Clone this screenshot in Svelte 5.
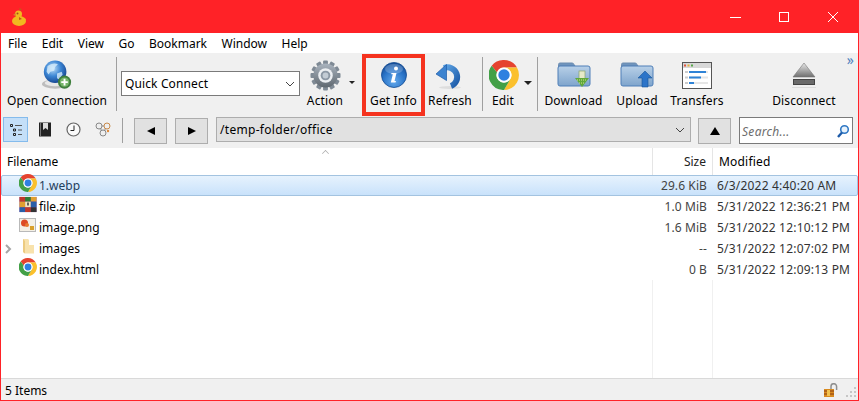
<script>
  const menus = ["File", "Edit", "View", "Go", "Bookmark", "Window", "Help"];
  const gearTeeth = Array.from({ length: 12 }, (_, i) => i * 30);
  const files = [
    { name: "1.webp", icon: "chrome", size: "29.6 KiB", modified: "6/3/2022 4:40:20 AM", selected: true },
    { name: "file.zip", icon: "zip", size: "1.0 MiB", modified: "5/31/2022 12:36:21 PM" },
    { name: "image.png", icon: "image", size: "1.6 MiB", modified: "5/31/2022 12:10:12 PM" },
    { name: "images", icon: "folder", size: "--", modified: "5/31/2022 12:07:02 PM", expandable: true },
    { name: "index.html", icon: "chrome", size: "0 B", modified: "5/31/2022 12:09:13 PM" }
  ];
</script>

{#snippet chrome(size)}
  <svg width={size} height={size} viewBox="4 4 40 40">
    <path fill="#e5432f" d="M24 4c7.4 0 13.900 4 17.300 10H24a10 10 0 0 0-9.400 6.600L7.600 11.800A20 20 0 0 1 24 4z" />
    <path fill="#fbc02d" d="M41.300 14A20 20 0 0 1 24 44l8.700-15A10 10 0 0 0 24 14z" />
    <path fill="#43a047" d="M7.600 11.800A20 20 0 0 0 24 44l8.700-15a10 10 0 0 1-18.100-8.400z" />
    <circle cx="24" cy="24" r="10" fill="#fff" />
    <circle cx="24" cy="24" r="7.600" fill="#2f80e0" />
  </svg>
{/snippet}

{#snippet folderIcon()}
  <path fill="#6f94bd" stroke="#6d8cb0" d="M1.500 9V4.500q0-1.500 1.500-1.500h12q1.500 0 2 1.500L18 6H1.500z" />
  <path fill="url(#folderFill)" stroke="#4f7fb8" d="M1 8q0-2 2-2h28q2 0 2 2v16q0 2-2 2H3q-2 0-2-2z" />
{/snippet}

<svg class="defs" width="0" height="0" aria-hidden="true">
  <defs>
    <radialGradient id="globeFill" cx="0.4" cy="0.35" r="0.7">
      <stop offset="0" stop-color="#bfe0f8" />
      <stop offset="0.5" stop-color="#3c86d4" />
      <stop offset="1" stop-color="#123f8a" />
    </radialGradient>
    <radialGradient id="infoFill" cx="0.5" cy="0.75" r="0.75">
      <stop offset="0" stop-color="#63a9ec" />
      <stop offset="0.6" stop-color="#2a74c8" />
      <stop offset="1" stop-color="#134a94" />
    </radialGradient>
    <linearGradient id="gearFill" x1="0" y1="0" x2="0" y2="1">
      <stop offset="0" stop-color="#aab4bf" />
      <stop offset="1" stop-color="#5f6870" />
    </linearGradient>
    <linearGradient id="folderFill" x1="0" y1="0" x2="0" y2="1">
      <stop offset="0" stop-color="#b8d0e8" />
      <stop offset="1" stop-color="#7ea4cc" />
    </linearGradient>
    <linearGradient id="ejectFill" x1="0" y1="0" x2="0" y2="1">
      <stop offset="0" stop-color="#e8e8e8" />
      <stop offset="1" stop-color="#6f6f6f" />
    </linearGradient>
    <linearGradient id="refreshFill" x1="0" y1="0" x2="1" y2="1">
      <stop offset="0" stop-color="#5ea4e4" />
      <stop offset="1" stop-color="#1c5aa8" />
    </linearGradient>
  </defs>
</svg>

<div class="window">
  <header class="titlebar">
    <svg class="duck" width="14" height="18" viewBox="0 0 14 18">
      <ellipse cx="7" cy="13" rx="7" ry="5" fill="#f1b81f" />
      <circle cx="6.500" cy="6" r="3.500" fill="#f1b81f" />
      <path fill="#f1b81f" d="M9 9l5 2-3 4z" />
      <path fill="#d9822b" d="M3.500 5L1 7l3 1z" />
      <circle cx="5.500" cy="5.500" r="1" fill="#a0501c" />
      <path fill="#c9541c" d="M7 0l3 1-2 2zM7 9l3 2-3 1z" />
    </svg>
    <div class="winbtns">
      <svg width="12" height="12" viewBox="0 0 12 12"><path d="M1 6.500h11" stroke="#fff" /></svg>
      <svg width="12" height="12" viewBox="0 0 12 12"><rect x="1.500" y="1.500" width="9" height="9" fill="none" stroke="#fff" /></svg>
      <svg width="12" height="12" viewBox="0 0 12 12"><path d="M1 1l10 10M11 1L1 11" stroke="#fff" /></svg>
    </div>
  </header>

  <nav class="menubar">
    {#each menus as menu}
      <span class="menu">{menu}</span>
    {/each}
  </nav>

  <div class="toolbar">
    <button class="tool open">
      <span class="slot">
        <svg width="32" height="31" viewBox="0 0 34 32">
          <ellipse cx="15" cy="25" rx="14" ry="5" fill="#bdbdbd" />
          <ellipse cx="15" cy="24" rx="11" ry="3.500" fill="#e8e8e8" />
          <circle cx="15" cy="12" r="12" fill="url(#globeFill)" />
          <path fill="#d6ecfb" opacity="0.8" d="M7 6q5-4 11-2l-3 3-1 4-4 1-2 3-2-3zM17 14l5-2 1 3-4 5-2-1z" />
          <circle cx="25" cy="23" r="7" fill="#3f7f3d" />
          <circle cx="25" cy="23" r="5" fill="#76b56a" />
          <path d="M25 19.500v7M21.500 23h7" stroke="#fff" stroke-width="2" />
        </svg>
      </span>
      <span>Open Connection</span>
    </button>
    <i class="sep"></i>

    <div class="quick">
      <span>Quick Connect</span>
      <svg width="10" height="6" viewBox="0 0 10 6"><path d="M1 1l4 4 4-4" fill="none" stroke="#444" /></svg>
    </div>

    <button class="tool action">
      <span class="slot">
        <svg width="31" height="31" viewBox="0 0 32 32">
          {#each gearTeeth as angle}
            <rect x="13.500" y="0.500" width="5" height="6" rx="1" fill="#7f8a95" transform="rotate({angle} 16 16)" />
          {/each}
          <circle cx="16" cy="16" r="12.500" fill="url(#gearFill)" />
          <circle cx="16" cy="16" r="7.500" fill="#eceff2" />
          <circle cx="16" cy="16" r="5" fill="#8c98a5" />
          <circle cx="16" cy="16" r="3" fill="#c3ccd5" />
        </svg>
      </span>
      <span>Action</span>
    </button>
    <i class="caret action-caret"></i>

    <button class="tool info">
      <span class="slot">
        <svg width="26" height="26" viewBox="0 0 26 26">
          <circle cx="13" cy="13" r="12.500" fill="url(#infoFill)" stroke="#124a92" stroke-width="0.800" />
          <ellipse cx="13" cy="7" rx="9" ry="5" fill="#fff" opacity="0.22" />
          <circle cx="15" cy="6.500" r="2" fill="#fff" />
          <path fill="#fff" d="M10.500 11h5l-2 8h1.500l-.5 1.500H9.800l2-8.200h-1.600z" />
        </svg>
      </span>
      <span>Get Info</span>
    </button>

    <button class="tool refresh">
      <span class="slot">
        <svg width="30" height="29" viewBox="0 0 30 28">
          <ellipse cx="15" cy="26" rx="11" ry="1.500" fill="#ddd" />
          <path fill="none" stroke="url(#refreshFill)" stroke-width="6" d="M9 6.500a9 9 0 1 1 7 18" />
          <path fill="#3c83d0" stroke="#1c5aa8" stroke-width="0.700" d="M1 12.500L11.500 3v16z" />
        </svg>
      </span>
      <span>Refresh</span>
    </button>
    <i class="sep"></i>

    <button class="tool edit">
      <span class="slot">{@render chrome(30)}</span>
      <span>Edit</span>
    </button>
    <i class="caret edit-caret"></i>
    <i class="sep"></i>

    <button class="tool download">
      <span class="slot">
        <svg width="34" height="30" viewBox="0 0 34 30">
          {@render folderIcon()}
          <rect x="22" y="11" width="6" height="9" fill="#e5e9c8" stroke="#8aa56a" stroke-width="0.700" />
          <path fill="#5fa83c" d="M18 18h14l-7 9z" />
          <path d="M20 20h10M22 23h6" stroke="#d7e58b" stroke-dasharray="1 1" />
        </svg>
      </span>
      <span>Download</span>
    </button>
    <button class="tool upload">
      <span class="slot">
        <svg width="34" height="30" viewBox="0 0 34 30">
          {@render folderIcon()}
          <path fill="#2c74c8" stroke="#1a5598" stroke-width="0.600" d="M25 11l7 7h-4v9h-6v-9h-4z" />
        </svg>
      </span>
      <span>Upload</span>
    </button>
    <button class="tool transfers">
      <span class="slot">
        <svg width="30" height="27" viewBox="0 0 30 27">
          <rect x="0.500" y="0.500" width="29" height="26" fill="#fff" stroke="#555" />
          <rect x="1" y="1" width="28" height="5" fill="#d8d8d8" />
          <path d="M2 3.500h2" stroke="#e2553f" stroke-width="2" />
          <path d="M5.500 3.500h2" stroke="#e8b23a" stroke-width="2" />
          <path d="M9 3.500h2" stroke="#58a84a" stroke-width="2" />
          <path d="M3 10h3M3 15.500h3M3 21h3" stroke="#ccc" stroke-width="2" />
          <path d="M7 10h19M7 15.500h19M7 21h19" stroke="#e6e6e6" stroke-width="2" />
          <path d="M7 10h17M7 15.500h12M7 21h5" stroke="#2f83d6" stroke-width="2" />
        </svg>
      </span>
      <span>Transfers</span>
    </button>
    <button class="tool disconnect">
      <span class="slot">
        <svg width="30" height="28" viewBox="0 0 30 28">
          <path fill="url(#ejectFill)" stroke="#777" stroke-width="0.600" d="M15 2l11 14H4z" />
          <rect x="4.500" y="18.500" width="21" height="5" fill="#6a6a6a" stroke="#444" />
          <path d="M3 26.500h24" stroke="#ddd" />
        </svg>
      </span>
      <span>Disconnect</span>
    </button>
    <span class="more">»</span>
  </div>

  <div class="pathbar">
    <button class="mode selected">
      <svg width="14" height="14" viewBox="0 0 14 14">
        <path d="M1.500 1.500h2v2h-2zM4.500 6h2v2h-2zM4.500 10.500h2v2h-2z" fill="none" stroke="#222" />
        <path d="M6 2.500h7M9 7h4M9 11.500h4" stroke="#555" />
      </svg>
    </button>
    <button class="mode">
      <svg width="14" height="15" viewBox="0 0 14 15">
        <rect x="1" y="0.500" width="12" height="14" fill="#222" />
        <path fill="#ddd" d="M5 1h5v7L7.500 6 5 8z" />
        <path d="M2.500 1v13" stroke="#777" />
      </svg>
    </button>
    <button class="mode">
      <svg width="15" height="15" viewBox="0 0 15 15">
        <circle cx="7.500" cy="7.500" r="6.500" fill="#fafafa" stroke="#666" stroke-width="1.200" />
        <path d="M8 3.500V8.500H4.500" fill="none" stroke="#222" />
      </svg>
    </button>
    <button class="mode">
      <svg width="16" height="15" viewBox="0 0 16 15">
        <path d="M4 4l8 0M4 4l4 7M12 4l-4 7" stroke="#bbb" stroke-width="2" />
        <circle cx="4" cy="4" r="3" fill="#eee" stroke="#888" />
        <circle cx="12" cy="4" r="3" fill="#eee" stroke="#c98a4a" />
        <circle cx="8" cy="11" r="3" fill="#eee" stroke="#888" />
        <circle cx="13" cy="9" r="1.200" fill="#e08a3a" />
      </svg>
    </button>
    <i class="sep short"></i>
    <button class="nav back"><i class="tri left"></i></button>
    <button class="nav forward"><i class="tri right"></i></button>
    <div class="path">
      <span>/temp-folder/office</span>
      <svg width="10" height="6" viewBox="0 0 10 6"><path d="M1 1l4 4 4-4" fill="none" stroke="#444" /></svg>
    </div>
    <button class="nav up"><i class="tri upward"></i></button>
    <div class="search">
      <span>Search...</span>
      <svg width="14" height="15" viewBox="0 0 14 15">
        <circle cx="8.500" cy="5.500" r="3.800" fill="#e8f2fb" stroke="#2f78c4" stroke-width="1.600" />
        <path d="M6 8.500l-4 4.500" stroke="#1c5aa8" stroke-width="2.400" />
      </svg>
    </div>
  </div>

  <main class="browser">
    <i class="sort-caret"></i>
    <div class="row head">
      <span class="name">Filename</span>
      <span class="size">Size</span>
      <span class="modified">Modified</span>
    </div>
    {#each files as file}
      <div class="row file" class:selected={file.selected}>
        <span class="name">
          <span class="twisty">
            {#if file.expandable}
              <svg width="7" height="10" viewBox="0 0 7 10"><path d="M1 1l4 4-4 4" fill="none" stroke="#a6a6a6" stroke-width="2" /></svg>
            {/if}
          </span>
          <span class="fileicon">
            {#if file.icon === "chrome"}
              {@render chrome(18)}
            {:else if file.icon === "zip"}
              <svg width="18" height="17" viewBox="0 0 18 18">
                <rect y="1" width="18" height="16" fill="#7b3f98" />
                <rect y="1" width="6" height="5" fill="#c0392b" />
                <rect x="6" y="1" width="6" height="5" fill="#2e7d32" />
                <rect x="12" y="1" width="6" height="5" fill="#e0a030" />
                <rect y="6" width="6" height="6" fill="#e0a030" />
                <rect x="6" y="6" width="6" height="6" fill="#f4e8c0" />
                <rect x="12" y="6" width="6" height="6" fill="#2a5fa8" />
                <rect y="12" width="6" height="5" fill="#2a5fa8" />
                <rect x="6" y="12" width="6" height="5" fill="#c0392b" />
                <rect x="12" y="12" width="6" height="5" fill="#333" />
                <path d="M8 7h2v3H8z" fill="#555" />
              </svg>
            {:else if file.icon === "image"}
              <svg width="17" height="14" viewBox="0 0 17 14">
                <rect x="0.500" y="0.500" width="16" height="13" fill="#f4f0e6" stroke="#b9b9b9" />
                <circle cx="5.500" cy="5" r="3.500" fill="#dd4b25" />
                <circle cx="8" cy="7" r="2" fill="#e8792f" />
                <rect x="11" y="8" width="4" height="4" fill="#d9a02a" />
              </svg>
            {:else}
              <svg width="12" height="15" viewBox="0 0 12 15">
                <path fill="#f8e2ac" d="M1 0h5l1 1v5h5v8.500H3L1 13z" />
                <path fill="#eccb80" d="M1 0v13l2 1.500V2z" />
              </svg>
            {/if}
          </span>
          <span class="label">{file.name}</span>
        </span>
        <span class="size">{file.size}</span>
        <span class="modified">{file.modified}</span>
      </div>
    {/each}
    <div class="columns-rest">
      <i></i><i></i>
    </div>
  </main>

  <footer class="statusbar">
    <span>5 Items</span>
    <div class="status-icons">
      <svg width="16" height="15" viewBox="0 0 16 15">
        <path d="M8 7V3.500a2.800 2.800 0 0 1 5.600 0V7" fill="none" stroke="#8f8f8f" stroke-width="1.500" />
        <rect x="1" y="6" width="10" height="8" fill="#d98a1f" />
        <path d="M1 8h10M1 11h10" stroke="#8a3d12" />
        <rect x="4" y="7" width="3" height="6" fill="#f2c14e" />
      </svg>
      <svg class="grip" width="11" height="11" viewBox="0 0 11 11">
        <path fill="#c6c6c6" d="M8 0h2v2H8zM4 4h2v2H4zM8 4h2v2H8zM0 8h2v2H0zM4 8h2v2H4zM8 8h2v2H8z" />
      </svg>
    </div>
  </footer>
</div>

<style>
  :global(body) {
    margin: 0;
  }

  .defs {
    position: absolute;
  }

  .window {
    box-sizing: border-box;
    width: 859px;
    height: 401px;
    display: flex;
    flex-direction: column;
    border: 1px solid #ff2227;
    background: #fff;
    font-family: "Noto Sans", "Open Sans", sans-serif;
    font-size: 12px;
    color: #000;
    overflow: hidden;
  }

  .titlebar {
    flex: 0 0 33px;
    display: flex;
    align-items: center;
    justify-content: space-between;
    background: #ff2227;
    margin: -1px -1px 0;
  }

  .duck {
    margin-left: 12px;
  }

  .winbtns {
    display: flex;
    gap: 37px;
    margin-right: 20px;
    align-items: center;
  }

  .menubar {
    flex: 0 0 20px;
    display: flex;
    align-items: center;
    padding-left: 7px;
    gap: 14.500px;
    background: #fff;
  }

  .toolbar {
    flex: 0 0 62px;
    display: flex;
    position: relative;
    background: #f0f0f0;
    letter-spacing: 0.12px;
  }

  button {
    font: inherit;
    letter-spacing: inherit;
    color: inherit;
    background: none;
    border: 0;
    padding: 0;
  }

  .tool {
    flex: none;
    display: flex;
    flex-direction: column;
    align-items: center;
    height: 62px;
    padding-top: 6px;
    box-sizing: border-box;
    white-space: nowrap;
    line-height: 16px;
  }

  .slot {
    height: 32px;
    margin-bottom: 2px;
    display: flex;
    align-items: center;
    justify-content: center;
  }

  .open { width: 115px; padding-right: 3px; }
  .action { width: 42px; margin-left: 4px; }
  .info { width: 63px; margin-left: 7px; margin-top: 1px; padding-top: 5px; outline: 4px solid #f5331f; outline-offset: -4px; }
  .refresh { width: 50px; margin-right: 7px; }
  .edit { width: 40px; }
  .edit .slot { margin-left: 2px; }
  .download { width: 67px; margin-left: 2px; }
  .upload { width: 56px; margin-left: 2px; }
  .transfers { width: 60px; margin-left: 2px; }
  .disconnect { width: 72px; margin-left: 41px; }

  .sep {
    flex: none;
    width: 1px;
    background: #a0a0a0;
    margin: 4px 0 5px;
  }

  .quick {
    flex: none;
    width: 179px;
    height: 25px;
    margin: 18px 0 0 4px;
    box-sizing: border-box;
    display: flex;
    align-items: center;
    justify-content: space-between;
    padding: 0 4px 0 3px;
    background: #fff;
    border: 1px solid #7a7a7a;
  }

  .caret {
    flex: none;
    width: 0;
    height: 0;
    margin-top: 28px;
    border: 3px solid transparent;
    border-top: 3px solid #222;
    border-bottom: 0;
  }

  .action-caret { margin-left: 3px; }
  .edit-caret { margin-left: 1px; margin-right: 5px; border-width: 4px 4px 0; }

  .more {
    position: absolute;
    right: 4px;
    top: 0;
    color: #4f81bd;
    font-size: 14px;
    line-height: 14px;
  }

  .pathbar {
    flex: 0 0 32px;
    display: flex;
    background: #f0f0f0;
    box-sizing: border-box;
    padding: 0 0 0 2px;
    align-items: flex-start;
  }

  .mode {
    flex: none;
    width: 25px;
    height: 25px;
    display: flex;
    align-items: center;
    justify-content: center;
    box-sizing: border-box;
    margin-right: 4px;
    margin-top: 1px;
  }

  .mode.selected {
    background: #c4dff8;
    border: 1px solid #84bbec;
  }

  .sep.short {
    height: 25px;
    margin: 2px 0 0 3px;
  }

  .nav {
    flex: none;
    width: 33px;
    height: 26px;
    margin-top: 2px;
    display: flex;
    align-items: center;
    justify-content: center;
    background: #e1e1e1;
    border: 1px solid #adadad;
    box-sizing: border-box;
  }

  .back { margin-left: 11px; }
  .forward { margin-left: 8px; }
  .up { margin-left: 7px; }

  .tri {
    width: 0;
    height: 0;
    border: 4px solid transparent;
  }

  .tri.left { border-right: 8px solid #000; border-left: 0; }
  .tri.right { border-left: 8px solid #000; border-right: 0; }
  .tri.upward { border: 5px solid transparent; border-bottom: 8px solid #000; border-top: 0; }

  .path {
    flex: none;
    width: 475px;
    height: 25px;
    margin: 1px 0 0 8px;
    box-sizing: border-box;
    display: flex;
    align-items: center;
    justify-content: space-between;
    padding: 0 5px 0 3px;
    background: #e1e1e1;
    border: 1px solid #adadad;
    letter-spacing: 0.3px;
  }

  .search {
    flex: none;
    width: 114px;
    height: 27px;
    margin: 1px 0 0 8px;
    box-sizing: border-box;
    display: flex;
    align-items: center;
    justify-content: space-between;
    padding: 1px 2px 0;
    background: #fff;
    border: 1px solid #7a7a7a;
    color: #6d6d6d;
    font-style: italic;
    letter-spacing: 0.3px;
  }

  .browser {
    flex: 1;
    position: relative;
    min-height: 0;
    display: flex;
    flex-direction: column;
    background: #fff;
  }

  .sort-caret {
    position: absolute;
    left: 321px;
    top: 0;
    width: 6px;
    height: 6px;
    border-top: 1px solid #a8a8a8;
    border-left: 1px solid #a8a8a8;
    transform: translateY(2px) rotate(45deg) scale(0.7);
  }

  .row {
    display: grid;
    grid-template-columns: 652px 60px 1fr;
    align-items: center;
    white-space: nowrap;
  }

  .head {
    height: 27px;
    flex: none;
  }

  .head span {
    height: 27px;
    line-height: 28px;
    box-sizing: border-box;
  }

  .head .name {
    padding-left: 6px;
    border-right: 1px solid #e5e5e5;
  }

  .head .size {
    text-align: right;
    padding-right: 6px;
    border-right: 1px solid #e5e5e5;
    color: #222;
  }

  .head .modified {
    padding-left: 6px;
    letter-spacing: 0.2px;
  }

  .file {
    height: 21px;
    flex: none;
    box-sizing: border-box;
    border: 1px solid transparent;
    grid-template-columns: 651px 60px 1fr;
    grid-template-rows: 19px;
    align-items: start;
    line-height: 19px;
  }

  .file.selected {
    background: linear-gradient(#e6f2fd, #c9e2fb);
    border: 1px solid #a3c3e0;
    border-radius: 2px;
    color: #24405c;
  }

  .file .name {
    display: flex;
    align-items: flex-start;
    height: 19px;
    padding-left: 3px;
  }

  .file .size {
    text-align: right;
    color: #444;
    padding-right: 6px;
    letter-spacing: 0.1px;
  }

  .file .modified {
    padding-left: 4px;
    color: #333;
    letter-spacing: 0.2px;
  }

  .twisty {
    width: 12px;
    height: 19px;
    display: flex;
    align-items: center;
    justify-content: flex-start;
    flex: none;
  }

  .fileicon {
    width: 22px;
    height: 18px;
    display: flex;
    align-items: center;
    justify-content: center;
    flex: none;
    padding-right: 1px;
    box-sizing: border-box;
    margin-top: -2px;
  }

  .columns-rest {
    flex: 1;
    display: grid;
    grid-template-columns: 652px 60px;
  }

  .columns-rest i {
    border-right: 1px solid #f0f0f0;
  }

  .statusbar {
    flex: 0 0 22px;
    display: flex;
    align-items: center;
    justify-content: space-between;
    padding-left: 4px;
    padding-top: 1px;
    background: #f0f0f0;
    border-top: 1px solid #d9d9d9;
    box-sizing: border-box;
  }

  .status-icons {
    display: flex;
    align-items: flex-end;
    gap: 7px;
    margin-right: 1px;
  }
</style>
